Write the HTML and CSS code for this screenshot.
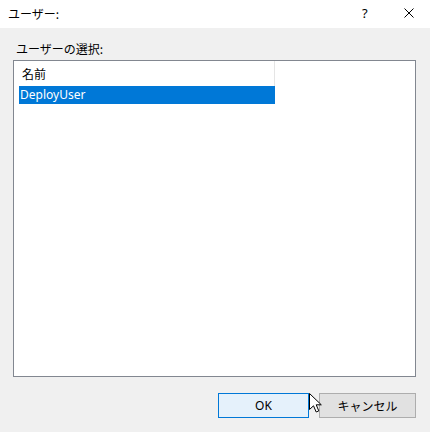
FILE: index.html
```html
<!DOCTYPE html>
<html lang="ja">
  <head>
    <meta charset="UTF-8" />
    <title>ユーザー:</title>
    <link rel="stylesheet" href="styles.css">
  </head>
  <body>
    <div class="dialog">
      <div class="titlebar">
        <span class="title">ユーザー:</span>
        <span class="help">?</span>
        <span class="close">
          <svg width="10" height="10" viewBox="0 0 10 10">
            <path d="M0.5 0.5 L9.5 9.5 M9.5 0.5 L0.5 9.5" stroke="#000" stroke-width="1" fill="none" />
          </svg>
        </span>
      </div>
      <div class="content">
        <div class="label">ユーザーの選択:</div>
        <div class="listbox">
          <div class="list-header">
            <div class="col">名前</div>
          </div>
          <div class="row selected">DeployUser</div>
        </div>
        <div class="buttons">
          <button class="btn default">OK</button>
          <button class="btn">キャンセル</button>
        </div>
      </div>
      <svg class="cursor" width="14" height="21" viewBox="0 0 14 21">
        <path d="M0.5 0.5 L0.5 16.5 L4.5 12.8 L7.2 19 L9.8 17.9 L7.2 11.8 L12.3 11.8 Z" fill="#fff" stroke="#000" stroke-width="1" stroke-linejoin="miter" />
      </svg>
    </div>
  </body>
</html>
```
FILE: styles.css
```css
body {
  margin: 0;
  background: #f0f0f0;
  font-family: "Noto Sans", "Noto Sans CJK JP", sans-serif;
  font-size: 12px;
  color: #000;
}
.dialog {
  position: relative;
  width: 430px;
  height: 432px;
}
.titlebar {
  height: 28px;
  background: #fff;
  display: flex;
  align-items: center;
  padding-left: 8px;
}
.title {
  flex: 1;
  font-family: "Noto Sans CJK JP", sans-serif;
  font-size: 12px;
  margin-top: -2px;
}
.help {
  box-sizing: border-box;
  width: 44px;
  padding-left: 6px;
  font-size: 13px;
  margin-top: -2px;
}
.close {
  box-sizing: border-box;
  width: 30px;
  padding-left: 4px;
  display: flex;
  align-items: center;
  margin-top: -2px;
}
.content {
  padding: 11px 14px 0 13px;
}
.label {
  font-family: "Noto Sans CJK JP", sans-serif;
  height: 21px;
  line-height: 20px;
  padding-left: 3px;
}
.listbox {
  box-sizing: border-box;
  height: 317px;
  background: #fff;
  border: 1px solid #828790;
}
.list-header {
  height: 25px;
  width: 261px;
  display: flex;
}
.col {
  box-sizing: border-box;
  width: 261px;
  height: 25px;
  line-height: 25px;
  padding-left: 8px;
  border-right: 1px solid #e5e5e5;
  font-family: "Noto Sans CJK JP", sans-serif;
}
.row {
  margin-left: 5px;
  width: 256px;
  height: 18px;
  line-height: 18px;
  padding-left: 1px;
  box-sizing: border-box;
}
.selected {
  background: #0078d7;
  color: #fff;
}
.buttons {
  display: flex;
  justify-content: flex-end;
  gap: 10px;
  margin-top: 16px;
}
.btn {
  box-sizing: border-box;
  height: 25px;
  width: 97px;
  border: 1px solid #adadad;
  background: #e1e1e1;
  font-family: "Noto Sans", "Noto Sans CJK JP", sans-serif;
  font-size: 12px;
  color: #000;
  padding: 0;
}
.btn.default {
  width: 91px;
  border: 1px solid #0078d7;
  background: #e5f1fb;
}
.cursor {
  position: absolute;
  left: 309px;
  top: 393px;
}
```
